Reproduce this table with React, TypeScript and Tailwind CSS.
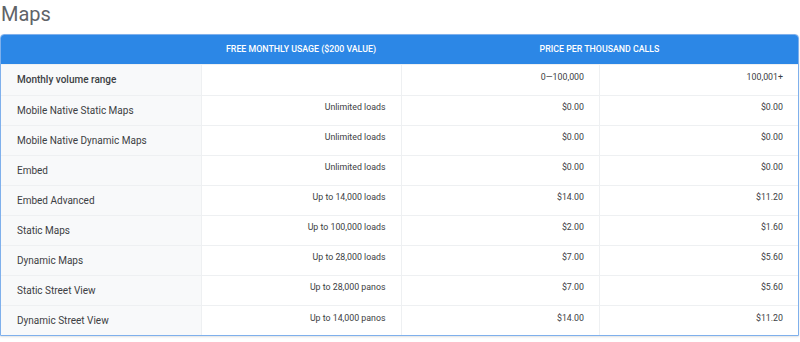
const rows: [string, string, string, string][] = [
  ['Mobile Native Static Maps', 'Unlimited loads', '$0.00', '$0.00'],
  ['Mobile Native Dynamic Maps', 'Unlimited loads', '$0.00', '$0.00'],
  ['Embed', 'Unlimited loads', '$0.00', '$0.00'],
  ['Embed Advanced', 'Up to 14,000 loads', '$14.00', '$11.20'],
  ['Static Maps', 'Up to 100,000 loads', '$2.00', '$1.60'],
  ['Dynamic Maps', 'Up to 28,000 loads', '$7.00', '$5.60'],
  ['Static Street View', 'Up to 28,000 panos', '$7.00', '$5.60'],
  ['Dynamic Street View', 'Up to 14,000 panos', '$14.00', '$11.20'],
];

function Cell({ children }: { children?: React.ReactNode }) {
  return (
    <td className="h-[30px] border-l border-[#eef0f2] pb-[4px] pr-[15px] text-right align-middle text-[8.8px] text-[#3c4043]">
      {children}
    </td>
  );
}

export default function App() {
  return (
    <div className="h-[342px] w-[800px] bg-white font-['Roboto',sans-serif]">
      <h1 className="pl-[1px] pt-[1px] text-[20px] font-normal leading-[26px] text-[#5f6368]">Maps</h1>
      <div className="mt-[7px] w-[799px] overflow-hidden rounded-t-[4px] border border-[#7fb0ec] shadow-[0_1px_2px_rgba(60,64,67,0.15)]">
        <table className="w-full table-fixed border-collapse">
          <thead>
            <tr className="h-[29px] bg-[#2c87e6] text-[8.8px] text-white">
              <th className="w-[200px]" />
              <th className="w-[200px] text-center font-medium">FREE MONTHLY USAGE ($200 VALUE)</th>
              <th colSpan={2} className="text-center font-medium">
                PRICE PER THOUSAND CALLS
              </th>
            </tr>
          </thead>
          <tbody>
            <tr className="border-t border-[#eef0f2]">
              <td className="h-[31px] bg-[#f8f9fa] pl-[16px] text-[10px] font-medium text-[#3c4043]">
                Monthly volume range
              </td>
              <Cell />
              <Cell>0—100,000</Cell>
              <Cell>100,001+</Cell>
            </tr>
            {rows.map(([label, free, a, b]) => (
              <tr key={label} className="border-t border-[#eef0f2]">
                <td className="h-[30px] bg-[#f8f9fa] pl-[16px] text-[10px] font-normal text-[#3c4043]">
                  {label}
                </td>
                <Cell>{free}</Cell>
                <Cell>{a}</Cell>
                <Cell>{b}</Cell>
              </tr>
            ))}
          </tbody>
        </table>
      </div>
    </div>
  );
}
